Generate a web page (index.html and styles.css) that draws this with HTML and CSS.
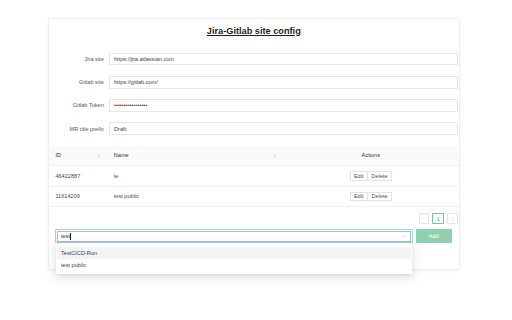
FILE: index.html
```html
<!DOCTYPE html>
<html lang="en">
<head>
<meta charset="UTF-8">
<meta name="viewport" content="width=device-width, initial-scale=1.0">
<title>Jira-Gitlab site config</title>
<link rel="stylesheet" href="styles.css">
</head>
<body>
  <div class="page">
    <div class="card">
      <h2 class="title">Jira-Gitlab site config</h2>

      <form class="config-form">
        <div class="form-row">
          <label for="jira">Jira site</label>
          <input type="text" id="jira" value="https://jira.atlassian.com">
        </div>
        <div class="form-row">
          <label for="gitlab">Gitlab site</label>
          <input type="text" id="gitlab" value="https://gitlab.com/">
        </div>
        <div class="form-row">
          <label for="token">Gitlab Token</label>
          <input type="password" id="token" value="abcdefghijklmnopq">
        </div>
        <div class="form-row">
          <label for="prefix">MR title prefix</label>
          <input type="text" id="prefix" value="Draft:">
        </div>
      </form>

      <table class="projects">
        <colgroup>
          <col class="col-id">
          <col class="col-name">
          <col>
        </colgroup>
        <thead>
          <tr>
            <th><div class="th-sort">ID <svg class="sorter" viewBox="0 0 10 14"><path d="M5 1 9 5H1z"/><path d="M5 13 1 9h8z"/></svg></div></th>
            <th><div class="th-sort">Name <svg class="sorter" viewBox="0 0 10 14"><path d="M5 1 9 5H1z"/><path d="M5 13 1 9h8z"/></svg></div></th>
            <th class="center">Actions</th>
          </tr>
        </thead>
        <tbody>
          <tr>
            <td>46422887</td>
            <td>te</td>
            <td class="center"><span class="btn-group"><button type="button" class="btn-sm">Edit</button><button type="button" class="btn-sm">Delete</button></span></td>
          </tr>
          <tr>
            <td>11614209</td>
            <td>test public</td>
            <td class="center"><span class="btn-group"><button type="button" class="btn-sm">Edit</button><button type="button" class="btn-sm">Delete</button></span></td>
          </tr>
        </tbody>
      </table>

      <div class="pager">
        <span class="page-item disabled"><svg viewBox="0 0 10 10"><path d="M6.5 1.5 3 5l3.5 3.5"/></svg></span>
        <span class="page-item active">1</span>
        <span class="page-item disabled"><svg viewBox="0 0 10 10"><path d="M3.5 1.5 7 5 3.5 8.5"/></svg></span>
      </div>

      <div class="add-row">
        <div class="select">
          <div class="select-inner">
            <span class="select-text">test<span class="caret"></span></span>
            <svg class="chevron" viewBox="0 0 12 12"><path d="M2 4.5 6 8l4-3.5"/></svg>
          </div>
        </div>
        <button type="button" class="btn-add">Add</button>

        <div class="dropdown">
          <div class="option active">TestCICD-Run</div>
          <div class="option">test public</div>
        </div>
      </div>
    </div>
  </div>
</body>
</html>
```

FILE: styles.css
```css
html, body {
  margin: 0;
  background-color: #fff;
}
.page {
  zoom: 0.4;
  width: 1280px;
  height: 800px;
  padding-top: 45px;
  box-sizing: border-box;
  font-family: "Liberation Sans", Arial, sans-serif;
  font-size: 14px;
  color: #4a4a4a;
}
.card {
  position: relative;
  margin-left: 120px;
  width: 1024px;
  padding: 14px 0 64px;
  border: 1px solid #f0f0f0;
  box-shadow: 0 2px 8px rgba(0, 0, 0, 0.06);
  background-color: #fff;
}
.title {
  margin: 0;
  text-align: center;
  font-size: 23px;
  line-height: 30px;
  font-weight: 700;
  color: #1f1f1f;
  text-decoration: underline;
  text-underline-offset: 3px;
}
.config-form {
  margin-top: 40px;
}
.form-row {
  display: flex;
  align-items: center;
  gap: 12px;
  margin-bottom: 26px;
  padding-right: 2px;
}
.form-row label {
  width: 137px;
  text-align: right;
  color: #555;
}
.form-row input {
  flex: 1;
  height: 32px;
  padding: 0 11px;
  box-sizing: border-box;
  border: 1px solid #e6e6e6;
  border-radius: 2px;
  font-family: inherit;
  font-size: 14px;
  color: #444;
  outline: none;
}
.projects {
  width: 100%;
  border-collapse: collapse;
  table-layout: fixed;
}
.col-id {
  width: 146px;
}
.col-name {
  width: 439px;
}
.projects th,
.projects td {
  height: 51px;
  padding: 0 16px;
  box-sizing: border-box;
  line-height: 22px;
  text-align: left;
  vertical-align: middle;
  border-bottom: 1px solid #f0f0f0;
}
.projects th {
  background-color: #fafafa;
  font-weight: 500;
  color: #333;
}
.projects .center {
  text-align: center;
}
.th-sort {
  display: flex;
  justify-content: space-between;
  align-items: center;
}
.sorter {
  width: 9px;
  height: 13px;
  fill: #c8c8c8;
}
.btn-group {
  display: inline-flex;
  vertical-align: middle;
}
.btn-sm {
  height: 24px;
  padding: 0 8px;
  border: 1px solid #e3e3e3;
  background-color: #fff;
  font-family: inherit;
  font-size: 14px;
  color: #555;
}
.btn-sm + .btn-sm {
  margin-left: -1px;
}
.pager {
  display: flex;
  justify-content: flex-end;
  gap: 8px;
  margin-top: 15px;
  padding-right: 2px;
}
.page-item {
  display: flex;
  align-items: center;
  justify-content: center;
  min-width: 26px;
  height: 28px;
  box-sizing: border-box;
  border: 1px solid #e6e6e6;
  border-radius: 2px;
  font-size: 14px;
}
.page-item svg {
  width: 10px;
  height: 10px;
  fill: none;
  stroke: #c4c4c4;
  stroke-width: 1.2;
}
.page-item.active {
  min-width: 30px;
  border-color: #79c69a;
  color: #4fa877;
}
.add-row {
  position: relative;
  display: flex;
  gap: 7px;
  margin-top: 13px;
  padding-left: 15px;
}
.select {
  width: 895px;
  height: 35px;
  box-sizing: border-box;
  border: 2px solid #a6d9bb;
  padding: 2px;
  border-radius: 2px;
}
.select-inner {
  display: flex;
  align-items: center;
  justify-content: space-between;
  height: 100%;
  box-sizing: border-box;
  padding: 0 10px 0 8px;
  border: 2px solid #aab5ee;
}
.select-text {
  display: flex;
  align-items: center;
  color: #333;
}
.caret {
  width: 1px;
  height: 16px;
  margin-left: 1px;
  background-color: #222;
}
.chevron {
  width: 12px;
  height: 12px;
  fill: none;
  stroke: #bdbdbd;
  stroke-width: 1.3;
}
.btn-add {
  width: 90px;
  height: 35px;
  border: none;
  border-radius: 2px;
  background-color: #8fd1ac;
  color: #fff;
  font-family: inherit;
  font-size: 14px;
}
.dropdown {
  position: absolute;
  top: 100%;
  left: 17px;
  width: 891px;
  padding: 4px 0;
  background-color: #fff;
  box-shadow: 0 3px 6px -4px rgba(0, 0, 0, 0.12), 0 6px 16px 0 rgba(0, 0, 0, 0.08), 0 9px 28px 8px rgba(0, 0, 0, 0.05);
  border-radius: 2px;
}
.option {
  height: 32px;
  line-height: 32px;
  padding: 0 13px;
  color: #444;
}
.option.active {
  margin: 4px 4px 0;
  padding: 0 9px;
  background-color: #f3f3f3;
}
```
